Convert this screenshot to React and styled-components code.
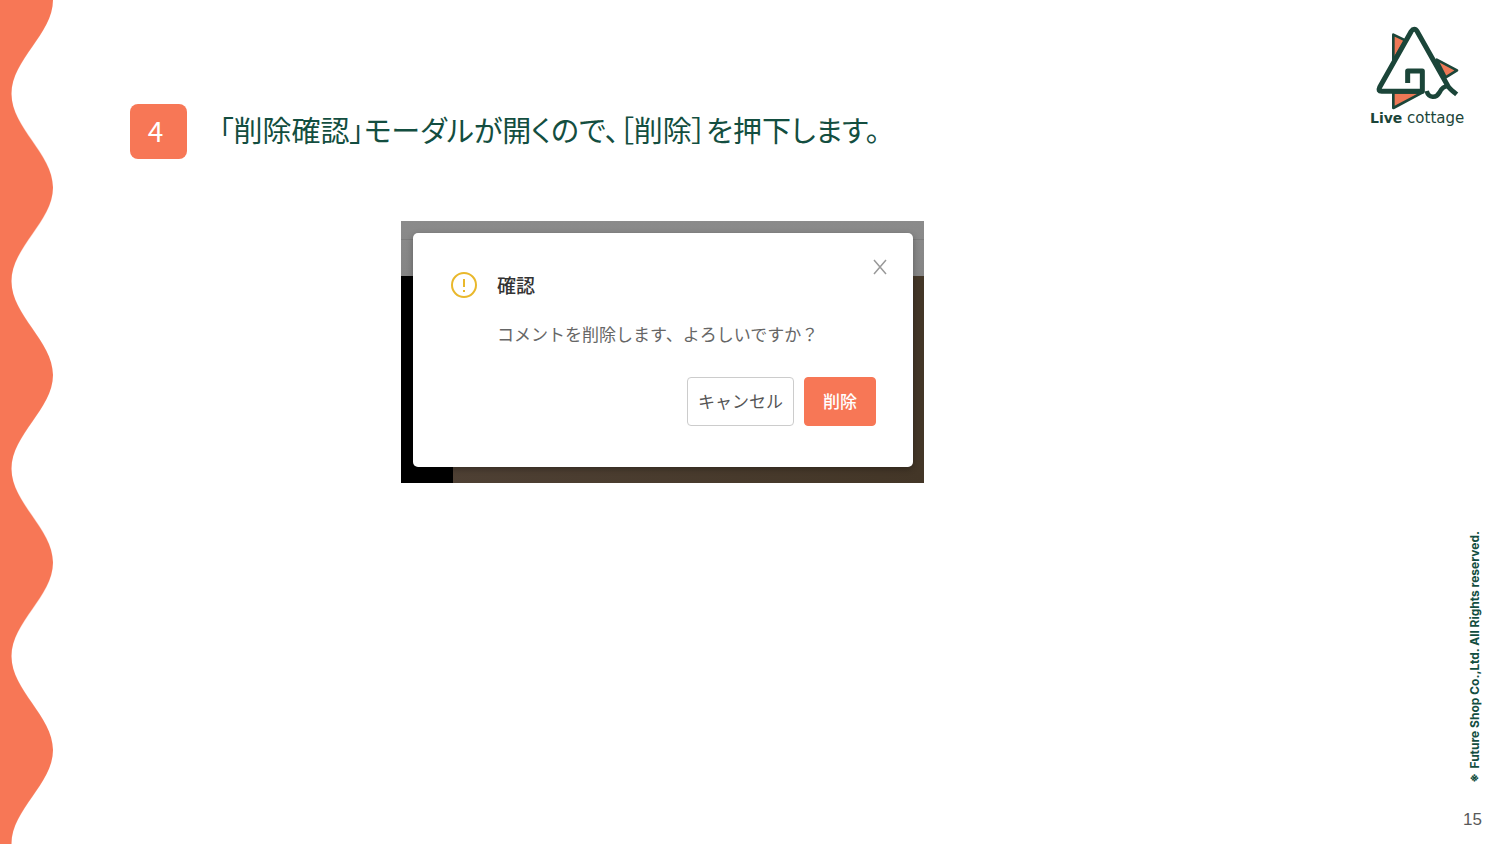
import React from "react";
import styled, { createGlobalStyle } from "styled-components";

const GlobalStyle = createGlobalStyle`
  * {
    box-sizing: border-box;
  }
  body {
    margin: 0;
    background: #ffffff;
    font-family: "Noto Sans CJK JP", sans-serif;
  }
`;

const Slide = styled.div`
  display: grid;
  grid-template-columns: 54px 1fr 130px;
  min-height: 100vh;
`;

const WaveBorder = styled.svg`
  display: block;
  width: 54px;
  height: 100%;
`;

const Main = styled.main`
  display: flex;
  flex-direction: column;
  gap: 62px;
  padding: 104px 175px 0 76px;
`;

const StepHeader = styled.header`
  display: flex;
  align-items: flex-start;
  gap: 32px;
`;

const StepNumber = styled.span`
  display: flex;
  justify-content: center;
  flex: none;
  width: 57px;
  height: 55px;
  padding-right: 6px;
  border-radius: 8px;
  background: #f77756;
  color: #ffffff;
  font-size: 28px;
  line-height: 52px;
`;

const StepTitle = styled.h1`
  margin: 0;
  color: #134e40;
  font-size: 29px;
  font-weight: 400;
  line-height: 50px;
  font-feature-settings: "palt";
`;

const Backdrop = styled.section`
  align-self: center;
  width: 523px;
  padding: 12px 11px 16px 12px;
  background:
    linear-gradient(#7c7c7c, #7c7c7c) 0 18px / 100% 1px no-repeat,
    linear-gradient(#8b8b8b, #858585) 0 0 / 100% 55px no-repeat,
    linear-gradient(#000000, #000000) 0 0 / 52px 100% no-repeat,
    linear-gradient(90deg, #4f4135, #433627);
`;

const Dialog = styled.div`
  display: grid;
  grid-template-columns: 26px 1fr auto;
  column-gap: 20px;
  padding: 24px 23px 41px 38px;
  border-radius: 5px;
  background: #ffffff;
  box-shadow: 0 2px 6px rgba(0, 0, 0, 0.3);
`;

const WarningIcon = styled.svg`
  width: 26px;
  height: 26px;
  margin-top: 15px;
`;

const DialogTitle = styled.h2`
  margin: 14px 0 0;
  color: #333333;
  font-size: 19px;
  font-weight: 500;
  line-height: 28px;
`;

const CloseButton = styled.button`
  width: 20px;
  height: 20px;
  padding: 0;
  border: 0;
  background: none;
  color: #999999;
`;

const Message = styled.p`
  grid-column: 2 / -1;
  margin: 22px 0 0;
  color: #666666;
  font-size: 17px;
  line-height: 26px;
`;

const Actions = styled.div`
  grid-column: 1 / -1;
  display: flex;
  justify-content: flex-end;
  gap: 10px;
  margin: 30px 14px 0 0;
`;

const Button = styled.button`
  height: 49px;
  padding: 0 ${(props) => (props.$primary ? 18 : 10)}px 2px;
  border: 1px solid ${(props) => (props.$primary ? "#f77756" : "#cccccc")};
  border-radius: 4px;
  background: ${(props) => (props.$primary ? "#f77756" : "#ffffff")};
  color: ${(props) => (props.$primary ? "#ffffff" : "#555555")};
  font-family: inherit;
  font-size: 17px;
  font-weight: ${(props) => (props.$primary ? 500 : 400)};
`;

const Side = styled.aside`
  display: flex;
  flex-direction: column;
  align-items: flex-end;
  padding: 26px 18px 14px 0;
`;

const Brand = styled.div`
  display: flex;
  flex-direction: column;
  align-items: center;
  align-self: flex-start;
  color: #1b4539;
`;

const BrandMark = styled.svg`
  width: 85px;
  height: 85px;
  overflow: visible;
`;

const BrandName = styled.div`
  font-family: "DejaVu Sans", sans-serif;
  font-size: 15px;
  line-height: 14px;
  white-space: nowrap;
`;

const BrandStrong = styled.b`
  font-size: 14px;
`;

const Copyright = styled.small`
  margin: auto 0 24px;
  color: #134e40;
  font-family: Inter, "Noto Sans CJK JP", sans-serif;
  font-size: 12px;
  font-weight: 700;
  line-height: 14px;
  white-space: nowrap;
  writing-mode: vertical-rl;
  transform: rotate(180deg);
`;

const PageNumber = styled.span`
  color: #595959;
  font-family: "Liberation Sans", sans-serif;
  font-size: 17px;
  line-height: 20px;
`;

const Wave = () => (
  <WaveBorder aria-hidden="true">
    <defs>
      <pattern
        id="wave"
        width="54"
        height="187.5"
        patternUnits="userSpaceOnUse"
      >
        <path
          d="M0 0H53C53 34 11.5 59.7 11.5 93.75S53 153.5 53 187.5H0Z"
          fill="#f77756"
        />
      </pattern>
    </defs>
    <rect width="54" height="100%" fill="url(#wave)" />
  </WaveBorder>
);

const Logo = () => (
  <Brand>
    <BrandMark
      viewBox="45 33 255 255"
      fill="none"
      stroke="#1b4539"
      strokeLinejoin="round"
      aria-hidden="true"
    >
      <g fill="#ee7856" strokeWidth="8">
        <path d="M100 59L136 76L100 138Z" />
        <path d="M230 134L291 166L257 187Z" />
        <path d="M100 232V279L188 232Z" />
      </g>
      <path
        d="M143 203V168H187V229H65Q55 229 59 219L153 50Q163 36 172 50L264 213"
        fill="#ffffff"
        stroke="none"
      />
      <path
        d="M143 204V168H187V229H65Q53 229 59 217L153 50Q163 36 172 50L262 210C268 222 278 228 290 238"
        strokeWidth="15"
      />
      <path
        d="M200 228C206 250 229 250 238 233C245 218 254 213 266 213"
        strokeWidth="14"
      />
    </BrandMark>
    <BrandName>
      <BrandStrong>Live</BrandStrong> cottage
    </BrandName>
  </Brand>
);

const App = () => {
  return (
    <>
      <GlobalStyle />
      <Slide>
        <Wave />

        <Main>
          <StepHeader>
            <StepNumber>4</StepNumber>
            <StepTitle lang="ja">
              「削除確認」モーダルが開くので、［削除］を押下します。
            </StepTitle>
          </StepHeader>

          <Backdrop>
            <Dialog role="dialog" aria-labelledby="dialog-title" lang="ja">
              <WarningIcon
                viewBox="0 0 26 26"
                fill="none"
                stroke="#e9b82c"
                aria-hidden="true"
              >
                <circle cx="13" cy="13" r="12" strokeWidth="2" />
                <path d="M13 7V15M13 18V20" strokeWidth="2" />
              </WarningIcon>
              <DialogTitle id="dialog-title">確認</DialogTitle>
              <CloseButton type="button" aria-label="閉じる">
                <svg width="20" height="20" viewBox="0 0 20 20">
                  <path
                    d="M4 3L16 17M16 3L4 17"
                    stroke="currentColor"
                    strokeWidth="1.5"
                  />
                </svg>
              </CloseButton>
              <Message>コメントを削除します、よろしいですか？</Message>
              <Actions>
                <Button type="button">キャンセル</Button>
                <Button type="button" $primary>
                  削除
                </Button>
              </Actions>
            </Dialog>
          </Backdrop>
        </Main>

        <Side>
          <Logo />
          <Copyright>※ Future Shop Co.,Ltd. All Rights reserved.</Copyright>
          <PageNumber>15</PageNumber>
        </Side>
      </Slide>
    </>
  );
};

export default App;
